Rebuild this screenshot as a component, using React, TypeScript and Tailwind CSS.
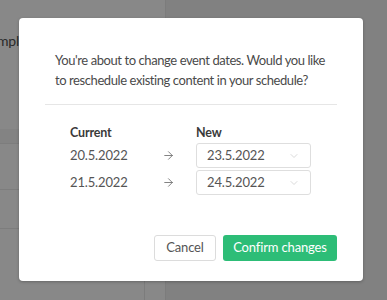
import { ChevronDown, ArrowRight } from "lucide-react";

const rows = [
  { current: "20.5.2022", next: "23.5.2022" },
  { current: "21.5.2022", next: "24.5.2022" },
];

export default function App() {
  return (
    <div
      className="relative w-[387px] h-[300px] overflow-hidden bg-[#828282] tracking-[-0.15px]"
      style={{ fontFamily: 'Lato, "Noto Sans", sans-serif' }}
    >
      {/* page behind the overlay */}
      <div className="flex h-full">
        <div className="w-[166px] h-full bg-[#888888] border-r border-[#7c7c7c] flex flex-col">
          <div className="h-[30px]" />
          <div className="text-[14px] text-[#2a2a2a] ml-[-3px] whitespace-nowrap">mple</div>
          <div className="h-[78px]" />
          <div className="h-[15px] bg-[#838383] border-b border-[#7d7d7d]" />
          <div className="h-[46px] border-b border-[#7d7d7d]" />
          <div className="h-[39px] border-b border-[#7d7d7d]" />
          <div className="flex-1 flex">
            <div className="w-[145px] border-r border-[#7c7c7c]" />
          </div>
        </div>
        <div className="flex-1 h-full bg-[#818181]" />
      </div>

      {/* modal */}
      <div className="absolute left-[19px] top-[18px] w-[344px] h-[263px] bg-white rounded-[4px] shadow-[0_1px_3px_rgba(0,0,0,0.25)] px-[26px] pt-[32px] flex flex-col">
        <p className="pl-[10px] text-[13px] leading-[20px] tracking-[-0.42px] text-[#4a4a4a] whitespace-nowrap">
          You're about to change event dates. Would you like
          <br />
          to reschedule existing content in your schedule?
        </p>
        <div className="mt-[14px] h-px bg-[#e6e6e6]" />

        <div className="pl-[25px] mt-[20px] flex flex-col gap-[2px]">
          <div className="flex items-center h-[16px] text-[12.5px] font-bold text-[#3a3a3a]">
            <div className="w-[126px]">Current</div>
            <div>New</div>
          </div>
          {rows.map((r) => (
            <div key={r.current} className="flex items-center h-[25px] text-[13px] text-[#555555]">
              <div className="w-[92px]">{r.current}</div>
              <div className="w-[34px] flex">
                <ArrowRight className="w-[13px] h-[13px] text-[#666666]" strokeWidth={1.5} />
              </div>
              <div className="w-[115px] h-[25px] border border-[#dedede] rounded-[3px] flex items-center justify-between pl-[10px] pr-[10px]">
                <span className="pt-[1px]">{r.next}</span>
                <ChevronDown className="w-[12px] h-[12px] text-[#c4c4c4]" strokeWidth={1.25} />
              </div>
            </div>
          ))}
        </div>

        <div className="mt-auto mb-[20px] flex justify-end gap-[7px]">
          <button className="w-[62px] h-[26px] border border-[#dcdcdc] rounded-[3px] text-[13px] text-[#555555] bg-white">
            Cancel
          </button>
          <button className="w-[114px] h-[26px] rounded-[3px] text-[13px] text-white bg-[#2dbd77]">
            Confirm changes
          </button>
        </div>
      </div>
    </div>
  );
}
